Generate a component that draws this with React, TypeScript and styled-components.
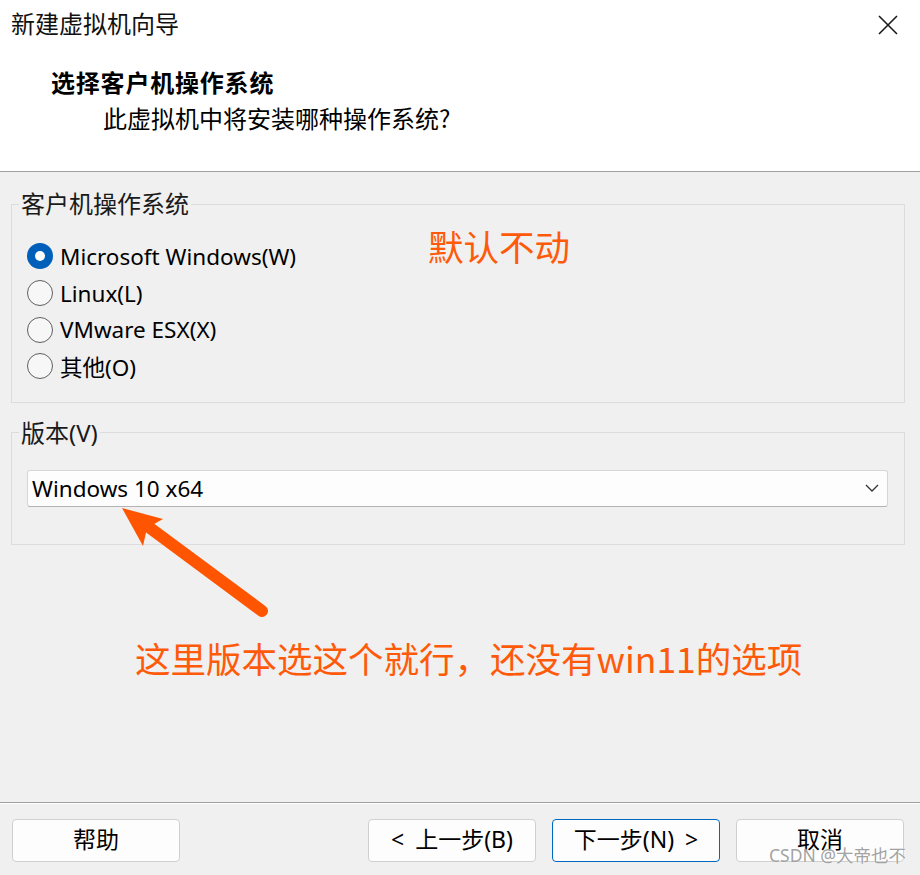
import React from "react";
import styled, { createGlobalStyle } from "styled-components";

const GlobalStyle = createGlobalStyle`
  html, body { margin: 0; padding: 0; }
  body {
    background: #f0f0f0;
    font-family: "Noto Sans", "Noto Sans CJK SC", sans-serif;
    color: #000;
  }
  * { box-sizing: border-box; }
`;

const Window = styled.div`
  position: relative;
  width: 920px;
  height: 875px;
  display: flex;
  flex-direction: column;
  background: #f0f0f0;
  overflow: hidden;
`;

const Header = styled.header`
  height: 172px;
  flex: none;
  background: #ffffff;
  border-bottom: 1px solid #a0a0a0;
  padding: 7px 22px 0 11px;
  display: flex;
  flex-direction: column;
`;

const TitleRow = styled.div`
  display: flex;
  align-items: center;
  justify-content: space-between;
  height: 32px;
`;

const Title = styled.div`
  font-family: "Noto Sans CJK SC", sans-serif;
  font-size: 24px;
  line-height: 32px;
  color: #111;
`;

const CloseIcon = styled.svg`
  width: 20px;
  height: 20px;
  margin-top: 3px;
`;

const Heading = styled.div`
  font-family: "Noto Sans CJK SC", sans-serif;
  font-weight: 700;
  font-size: 24px;
  letter-spacing: 0.8px;
  line-height: 32px;
  margin: 27px 0 0 40px;
`;

const Subtitle = styled.div`
  font-family: "Noto Sans CJK SC", sans-serif;
  font-size: 24px;
  line-height: 32px;
  margin: 4px 0 0 92px;
`;

const Body = styled.main`
  flex: 1;
  padding: 16px 15px 0 11px;
  display: flex;
  flex-direction: column;
`;

const Group = styled.fieldset<{ $mt?: number; $pt: number; $pb: number }>`
  margin: ${(p) => p.$mt ?? 0}px 0 0 0;
  border: 1px solid #dcdcdc;
  padding: ${(p) => p.$pt}px 16px ${(p) => p.$pb}px 7px;
  min-width: 0;
`;

const Legend = styled.legend`
  font-family: "Noto Sans", "Noto Sans CJK SC", sans-serif;
  font-size: 24px;
  line-height: 32px;
  padding: 0 2px;
  color: #1a1a1a;
`;

const RadioList = styled.div`
  display: flex;
  flex-direction: column;
  padding-left: 8px;
`;

const RadioRow = styled.label`
  display: flex;
  align-items: center;
  height: 36.7px;
  gap: 7px;
  font-size: 22.5px;
`;

const RadioCircle = styled.span<{ $checked?: boolean }>`
  width: 26px;
  height: 26px;
  border-radius: 50%;
  flex: none;
  display: flex;
  align-items: center;
  justify-content: center;
  background: ${(p) => (p.$checked ? "#005fb8" : "#f7f7f7")};
  border: ${(p) => (p.$checked ? "none" : "1.5px solid #5f5f5f")};
  &::after {
    content: "";
    width: 10px;
    height: 10px;
    border-radius: 50%;
    background: #fff;
    display: ${(p) => (p.$checked ? "block" : "none")};
  }
`;

const SelectBox = styled.div`
  margin-left: 8px;
  height: 37px;
  background: #fdfdfd;
  border: 1px solid #d6d6d6;
  border-bottom-color: #b3b3b3;
  border-radius: 3px;
  display: flex;
  align-items: center;
  justify-content: space-between;
  padding: 0 8px 0 4px;
  font-size: 22.5px;
`;

const Chevron = styled.svg`
  width: 14px;
  height: 8px;
`;

const Footer = styled.footer`
  height: 73px;
  flex: none;
  border-top: 1px solid #a0a0a0;
  box-shadow: inset 0 1px 0 #ffffff;
  padding: 16px 16px 0 12px;
  display: flex;
  justify-content: space-between;
  align-items: flex-start;
`;

const ButtonGroup = styled.div`
  display: flex;
  gap: 16px;
`;

const Button = styled.button<{ $primary?: boolean }>`
  width: 168px;
  height: 43px;
  border-radius: 4px;
  background: #fdfdfd;
  border: 1px solid ${(p) => (p.$primary ? "#0067c0" : "#d0d0d0")};
  font-family: "Noto Sans", "Noto Sans CJK SC", sans-serif;
  font-size: 23px;
  word-spacing: 5px;
  line-height: 1;
  color: #000;
  display: flex;
  align-items: center;
  justify-content: center;
  padding: 0 0 3px 0;
`;

const Note = styled.div<{ $left: number; $top: number }>`
  position: absolute;
  left: ${(p) => p.$left}px;
  top: ${(p) => p.$top}px;
  font-family: "Noto Sans CJK SC", sans-serif;
  font-size: 35.5px;
  line-height: 36px;
  color: #ff5a0a;
  white-space: nowrap;
`;

const ArrowLayer = styled.svg`
  position: absolute;
  left: 0;
  top: 0;
  width: 920px;
  height: 875px;
  pointer-events: none;
`;

const Watermark = styled.div`
  position: absolute;
  right: 14px;
  bottom: 8px;
  font-family: "Noto Sans", "Noto Sans CJK SC", sans-serif;
  font-size: 17.5px;
  color: rgba(150, 150, 150, 0.9);
  text-shadow: 0 0 1px #fff;
`;

export default function App() {
  return (
    <>
      <GlobalStyle />
      <Window>
        <Header>
          <TitleRow>
            <Title>新建虚拟机向导</Title>
            <CloseIcon viewBox="0 0 20 20">
              <path d="M1 1 L19 19 M19 1 L1 19" stroke="#1a1a1a" strokeWidth="1.6" fill="none" />
            </CloseIcon>
          </TitleRow>
          <Heading>选择客户机操作系统</Heading>
          <Subtitle>此虚拟机中将安装哪种操作系统?</Subtitle>
        </Header>
        <Body>
          <Group $pt={18} $pb={17}>
            <Legend>客户机操作系统</Legend>
            <RadioList>
              <RadioRow>
                <RadioCircle $checked />
                Microsoft Windows(W)
              </RadioRow>
              <RadioRow>
                <RadioCircle />
                Linux(L)
              </RadioRow>
              <RadioRow>
                <RadioCircle />
                VMware ESX(X)
              </RadioRow>
              <RadioRow>
                <RadioCircle />
                其他(O)
              </RadioRow>
            </RadioList>
          </Group>
          <Group $mt={14} $pt={21} $pb={37}>
            <Legend>版本(V)</Legend>
            <SelectBox>
              <span>Windows 10 x64</span>
              <Chevron viewBox="0 0 14 8">
                <path d="M1 1 L7 7 L13 1" stroke="#333" strokeWidth="1.3" fill="none" />
              </Chevron>
            </SelectBox>
          </Group>
        </Body>
        <Footer>
          <Button>帮助</Button>
          <ButtonGroup>
            <Button>&lt; 上一步(B)</Button>
            <Button $primary>下一步(N) &gt;</Button>
            <Button>取消</Button>
          </ButtonGroup>
        </Footer>

        <Note $left={428} $top={228}>默认不动</Note>
        <Note $left={135} $top={640}>这里版本选这个就行，还没有win11的选项</Note>
        <ArrowLayer viewBox="0 0 920 875">
          <line x1="262" y1="611" x2="150" y2="528" stroke="#ff5500" strokeWidth="12" strokeLinecap="round" />
          <polygon points="122,508 163,519 147,528 143,546" fill="#ff5500" />
        </ArrowLayer>
        <Watermark>CSDN @大帝也不</Watermark>
      </Window>
    </>
  );
}
